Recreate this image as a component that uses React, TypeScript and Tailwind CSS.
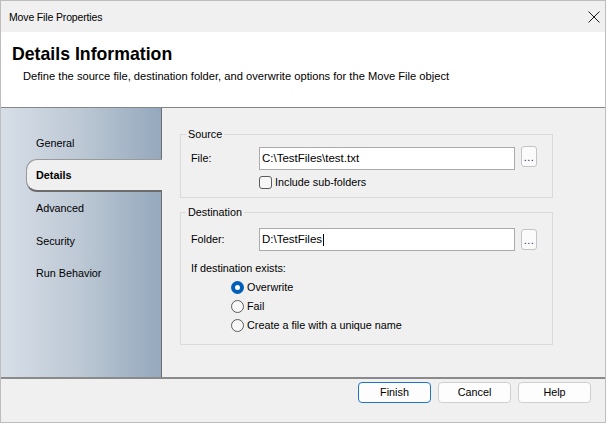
import React from 'react';

const CloseIcon = () => (
    <svg width="12" height="12" viewBox="0 0 12 12" className="block">
        <path d="M0.5 0.5 L11.5 11.5 M11.5 0.5 L0.5 11.5" stroke="#1a1a1a" strokeWidth="1" fill="none" />
    </svg>
);

const BrowseButton = ({ className }: { className?: string }) => (
    <button className={`w-[16px] h-[21px] ml-[6px] rounded-[3px] border border-[#c4c4c4] bg-[#fbfbfb] flex items-end justify-center pb-[5px] text-[#1c1c6e] text-[11px] leading-[8px] tracking-[0.5px] ${className ?? ''}`}>
        ...
    </button>
);

const Radio = ({ label, checked }: { label: string; checked?: boolean }) => (
    <div className="h-[19px] flex items-center pl-[40px]">
        {checked ? (
            <span className="w-[13px] h-[13px] rounded-full bg-[#005fb8] flex items-center justify-center">
                <span className="w-[5px] h-[5px] rounded-full bg-white" />
            </span>
        ) : (
            <span className="w-[13px] h-[13px] rounded-full border border-[#5c5c5c] bg-[#f7f7f7]" />
        )}
        <span className="ml-[3px]">{label}</span>
    </div>
);

const navItems = [
    { label: 'General', h: 'h-[32px]' },
    { label: 'Details', h: 'h-[33px]', active: true },
    { label: 'Advanced', h: 'h-[33px]' },
    { label: 'Security', h: 'h-[32px]' },
    { label: 'Run Behavior', h: 'h-[32px]' },
];

export default function App() {
    return (
        <div className="w-[606px] h-[423px] flex flex-col border border-[#bdbdbd] bg-[#f0f0f0] text-black font-['Liberation_Sans',Arial,sans-serif] overflow-hidden">
            {/* title bar */}
            <div className="h-[31px] shrink-0 flex items-start justify-between pt-[10px] pl-[8px] pr-[5px]">
                <span className="text-[10.5px] leading-[12px] tracking-[-0.15px]">Move File Properties</span>
                <CloseIcon />
            </div>

            {/* header */}
            <div className="h-[76px] shrink-0 bg-white border-b border-[#858585] pt-[12px] pl-[11px]">
                <div className="text-[17.7px] leading-[20px] font-bold">Details Information</div>
                <div className="mt-[5px] pl-[11px] text-[11.15px] leading-[14px]">
                    Define the source file, destination folder, and overwrite options for the Move File object
                </div>
            </div>

            {/* body */}
            <div className="h-[269px] shrink-0 flex text-[10.8px] leading-[13px]">
                <div className="w-[161px] shrink-0 flex flex-col pt-[19px] border-r border-[#6e6e6e] bg-linear-to-r from-[#d7dee8] via-[#bcc8d4] to-[#95a8bd]">
                    {navItems.map((item) =>
                        item.active ? (
                            <div key={item.label}
                                className={`${item.h} ml-[25px] -mr-px relative z-10 flex items-center pl-[9px] font-bold bg-[#f0f0f0] rounded-l-[11px] border-t border-l border-b-2 border-t-[#9a9a9a] border-l-[#9a9a9a] border-b-[#6c6c6c]`}>
                                {item.label}
                            </div>
                        ) : (
                            <div key={item.label} className={`${item.h} flex items-center pl-[35px]`}>
                                {item.label}
                            </div>
                        )
                    )}
                </div>

                <div className="flex-1 pt-[19px] pl-[18px]">
                    <fieldset className="w-[373px] border border-[#dadada] p-0 m-0">
                        <legend className="ml-[5px] px-[2px] leading-[14px]">Source</legend>
                        <div className="pl-[10px] pb-[8px]">
                            <div className="mt-[6px] flex items-center">
                                <span className="w-[68px]">File:</span>
                                <div className="w-[256px] h-[23px] border border-[#ababab] bg-white flex items-center pl-[2px] text-[11.5px]">
                                    C:\TestFiles\test.txt
                                </div>
                                <BrowseButton className="self-start -mt-[1px]" />
                            </div>
                            <div className="mt-[6px] h-[13px] flex items-center pl-[68px]">
                                <span className="w-[13px] h-[13px] rounded-[3px] border border-[#5c5c5c] bg-[#f7f7f7]" />
                                <span className="ml-[3px]">Include sub-folders</span>
                            </div>
                        </div>
                    </fieldset>

                    <fieldset className="mt-[7px] w-[373px] border border-[#dadada] p-0 m-0">
                        <legend className="ml-[5px] px-[2px] leading-[14px]">Destination</legend>
                        <div className="pl-[10px] pb-[9px]">
                            <div className="mt-[9px] flex items-center">
                                <span className="w-[68px]">Folder:</span>
                                <div className="w-[256px] h-[23px] border border-[#ababab] bg-white flex items-center pl-[2px] text-[11.5px]">
                                    D:\TestFiles
                                    <span className="inline-block w-px h-[12px] bg-black ml-[1px]" />
                                </div>
                                <BrowseButton className="self-start mt-[1px] h-[20px]" />
                            </div>
                            <div className="mt-[11px] h-[13px]">If destination exists:</div>
                            <div className="mt-[3px]">
                                <Radio label="Overwrite" checked />
                                <Radio label="Fail" />
                                <Radio label="Create a file with a unique name" />
                            </div>
                        </div>
                    </fieldset>
                </div>
            </div>

            {/* footer */}
            <div className="flex-1 border-t-2 border-[#8a8a8a] flex justify-end items-start gap-[7px] pt-[3px] pr-[14px] text-[10.8px]">
                <button className="w-[73px] h-[21px] rounded-[4px] border border-[#1f74cc] bg-[#fdfdfd]">Finish</button>
                <button className="w-[73px] h-[21px] rounded-[4px] border border-[#cfcfcf] bg-[#fdfdfd]">Cancel</button>
                <button className="w-[73px] h-[21px] rounded-[4px] border border-[#cfcfcf] bg-[#fdfdfd]">Help</button>
            </div>
        </div>
    );
}
